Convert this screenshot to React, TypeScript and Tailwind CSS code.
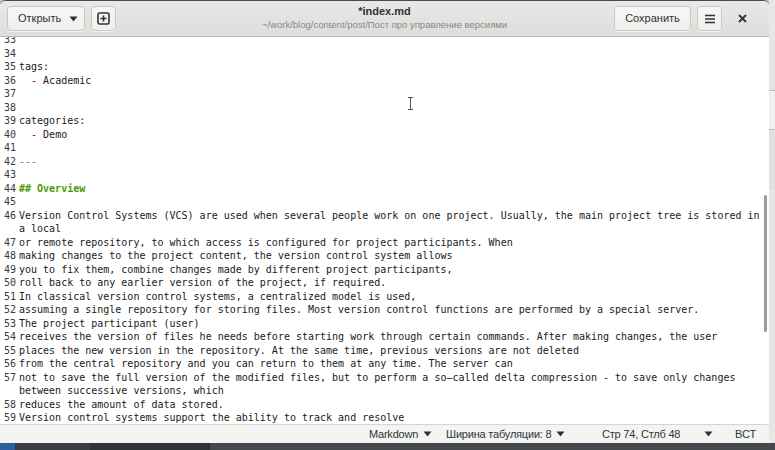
import React from "react";

type Row = { n?: number; t: string; cls?: string };

const rows: Row[] = [
  { n: 33, t: "" },
  { n: 34, t: "" },
  { n: 35, t: "tags:" },
  { n: 36, t: "LIST Academic" },
  { n: 37, t: "" },
  { n: 38, t: "" },
  { n: 39, t: "categories:" },
  { n: 40, t: "LIST Demo" },
  { n: 41, t: "" },
  { n: 42, t: "---", cls: "text-[#4e9a06]" },
  { n: 43, t: "" },
  { n: 44, t: "## Overview", cls: "text-[#4e9a06] font-bold" },
  { n: 45, t: "" },
  { n: 46, t: "Version Control Systems (VCS) are used when several people work on one project. Usually, the main project tree is stored in" },
  { t: "a local" },
  { n: 47, t: "or remote repository, to which access is configured for project participants. When" },
  { n: 48, t: "making changes to the project content, the version control system allows" },
  { n: 49, t: "you to fix them, combine changes made by different project participants," },
  { n: 50, t: "roll back to any earlier version of the project, if required." },
  { n: 51, t: "In classical version control systems, a centralized model is used," },
  { n: 52, t: "assuming a single repository for storing files. Most version control functions are performed by a special server." },
  { n: 53, t: "The project participant (user)" },
  { n: 54, t: "receives the version of files he needs before starting work through certain commands. After making changes, the user" },
  { n: 55, t: "places the new version in the repository. At the same time, previous versions are not deleted" },
  { n: 56, t: "from the central repository and you can return to them at any time. The server can" },
  { n: 57, t: "not to save the full version of the modified files, but to perform a so\u2014called delta compression - to save only changes" },
  { t: "between successive versions, which" },
  { n: 58, t: "reduces the amount of data stored." },
  { n: 59, t: "Version control systems support the ability to track and resolve" },
];

const Caret = () => (
  <svg width="9" height="6" viewBox="0 0 9 6" className="inline-block shrink-0">
    <path d="M0.5 0.5 L8.5 0.5 L4.5 5.5 Z" fill="#2e3436" />
  </svg>
);

const btn =
  "h-[25px] flex items-center rounded-[4px] border border-[#cdc7c2] bg-gradient-to-b from-[#f7f7f6] to-[#eeeeed] shadow-[0_1px_0_rgba(255,255,255,0.6)]";

export default function App() {
  return (
    <div className="w-[775px] h-[450px] overflow-hidden flex flex-col bg-[#d4d4d2]" style={{ fontFamily: '"Liberation Sans", Arial, sans-serif' }}>
      <div className="flex h-[443px]">
        {/* window */}
        <div className="w-[769px] h-[443px] flex flex-col bg-white rounded-t-[6px] overflow-hidden border-t border-[#4a4a4a] shadow-[0_0_3px_rgba(0,0,0,0.5)]">
          {/* header */}
          <div className="h-[36px] shrink-0 flex items-center px-[7px] bg-gradient-to-b from-[#e8e8e7] to-[#dddddb] border-b border-[#bfb8b1]">
            <div className="flex-1 flex items-center">
              <div className={btn + " w-[78px] pl-[10px] pr-[6px] justify-between text-[11px] text-[#2e3436]"}>
                <span>Открыть</span>
                <Caret />
              </div>
              <div className={btn + " ml-[6px] w-[25px] justify-center"}>
                <svg width="13" height="13" viewBox="0 0 13 13">
                  <rect x="1" y="1" width="11" height="11" rx="1.5" fill="none" stroke="#2e3436" strokeWidth="1.6" />
                  <path d="M6.5 3.5 V9.5 M3.5 6.5 H9.5" stroke="#2e3436" strokeWidth="1.6" />
                </svg>
              </div>
            </div>
            <div className="flex flex-col items-center whitespace-nowrap -mt-[1px]">
              <div className="text-[11px] font-bold text-[#2e3436] leading-[13px]">*index.md</div>
              <div className="text-[9.5px] text-[#888a85] leading-[12px] mt-[1px]">~/work/blog/content/post/Пост про управление версиями</div>
            </div>
            <div className="flex-1 flex items-center justify-end">
              <div className={btn + " w-[77px] justify-center text-[11px] text-[#2e3436]"}>Сохранить</div>
              <div className={btn + " ml-[6px] w-[25px] justify-center"}>
                <svg width="12" height="10" viewBox="0 0 12 10">
                  <path d="M1 1.5 H11 M1 5 H11 M1 8.5 H11" stroke="#2e3436" strokeWidth="1.6" />
                </svg>
              </div>
              <div className="w-[40px] flex items-center justify-center">
                <svg width="9" height="9" viewBox="0 0 9 9">
                  <path d="M1 1 L8 8 M8 1 L1 8" stroke="#2e3436" strokeWidth="1.8" />
                </svg>
              </div>
            </div>
          </div>
          {/* editor */}
          <div className="flex-1 relative overflow-hidden bg-white">
            <div className="-mt-[4px]" style={{ fontFamily: '"DejaVu Sans Mono", monospace' }}>
              {rows.map((r, i) => (
                <div key={i} className="flex h-[13.5px] leading-[13.5px] text-[10px] text-[#1a1a1a] whitespace-pre">
                  <div className="w-[16px] text-right text-[#3a3a3a]">{r.n ?? ""}</div>
                  <div className={"pl-[3px] " + (r.cls ?? "")}>
                    {r.t.startsWith("LIST ") ? (
                      <>
                        {"  "}
                        <span className="text-[#a40000]">-</span>
                        {" " + r.t.slice(5)}
                      </>
                    ) : (
                      r.t
                    )}
                  </div>
                </div>
              ))}
            </div>
            {/* I-beam cursor */}
            <svg className="absolute left-[407px] top-[60px]" width="7" height="13" viewBox="0 0 7 13">
              <path d="M1 0.5 H6 M3.5 0.5 V12.5 M1 12.5 H6" stroke="#555" strokeWidth="1" />
            </svg>
            {/* scrollbar */}
            <div className="absolute right-[2px] top-[158px] w-[3px] h-[137px] rounded-full bg-[#9c9c9c]" />
          </div>
          {/* status bar */}
          <div className="h-[19px] shrink-0 flex items-center border-t border-[#d8d4d0] bg-[#f4f4f3] text-[11px] text-[#2e3436] whitespace-nowrap">
            <div className="w-[369px] shrink-0" />
            <div className="w-[77px] shrink-0 flex items-center gap-[5px]">
              <span className="tracking-[-0.2px]">Markdown</span>
              <Caret />
            </div>
            <div className="w-[156px] shrink-0 flex items-center gap-[5px]">
              <span className="tracking-[-0.2px]">Ширина табуляции: 8</span>
              <Caret />
            </div>
            <div className="w-[102px] shrink-0 tracking-[-0.2px]">Стр 74, Стлб 48</div>
            <div className="w-[31px] shrink-0 flex"><Caret /></div>
            <div>ВСТ</div>
          </div>
        </div>
        {/* right desktop strip */}
        <div className="flex-1 flex flex-col bg-[#e6e6e5] text-[10px] text-[#2e3436]">
          <div className="h-[90px]" />
          <div className="h-[40px] border-y border-[#bdbdbd] bg-[#f0f0ef]" />
          <div className="h-[60px] bg-[#e0e0df]" />
        </div>
      </div>
      {/* bottom desktop strip */}
      <div className="flex-1 flex bg-[#3a3d42]">
        <div className="w-[15px] bg-[#2a5fa0]" />
        <div className="w-[75px] bg-[#3a3d42]" />
        <div className="w-[120px] bg-[#2f3236]" />
        <div className="flex-1 bg-[#45484d]" />
      </div>
    </div>
  );
}
